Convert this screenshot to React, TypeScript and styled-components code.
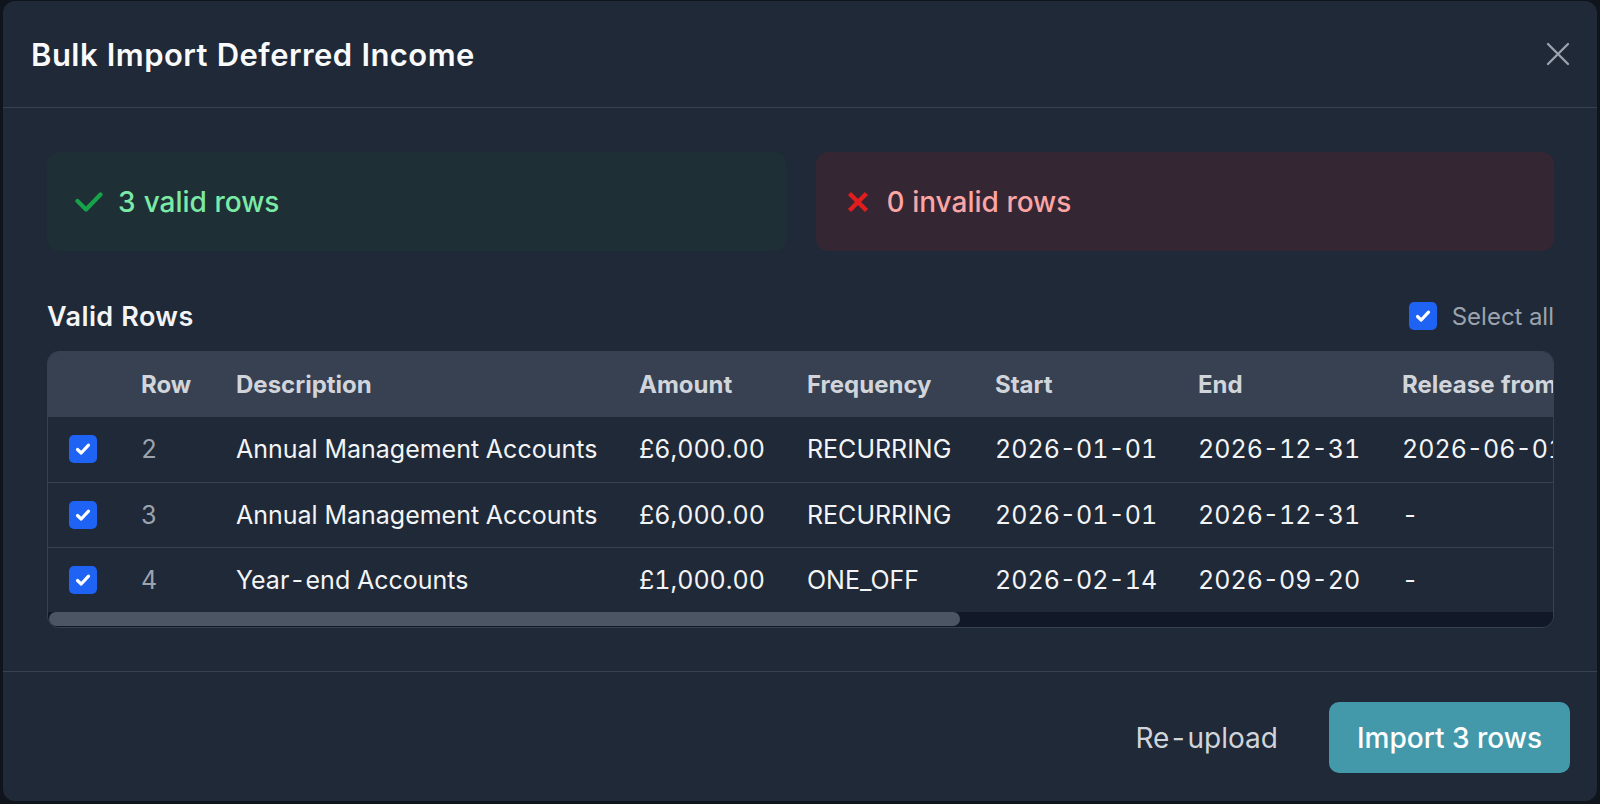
import React from "react";
import styled, { createGlobalStyle } from "styled-components";

const GlobalStyle = createGlobalStyle`
  html, body {
    margin: 0;
    padding: 0;
    background: #0f141d;
    overflow: hidden;
  }
  body {
    font-family: Inter, "Noto Sans", "Liberation Sans", sans-serif;
    font-variant-numeric: tabular-nums;
    -webkit-font-smoothing: antialiased;
  }
  * { box-sizing: border-box; }
`;

const Page = styled.div`
  height: 804px;
  padding: 1px 3px 3px 3px;
  display: flex;
`;

const Modal = styled.div`
  flex: 1;
  background: #1f2937;
  border-radius: 12px;
  display: flex;
  flex-direction: column;
  overflow: hidden;
`;

const Header = styled.header`
  height: 107px;
  flex: none;
  display: flex;
  align-items: center;
  justify-content: space-between;
  padding: 0 27px 0 28px;
  border-bottom: 1px solid #374151;
`;

const Title = styled.h2`
  margin: 0;
  font-size: 31px;
  font-weight: 600;
  color: #f9fafb;
  letter-spacing: 0.45px;
`;

const CloseButton = styled.button`
  width: 24px;
  height: 24px;
  padding: 0;
  border: 0;
  background: transparent;
  color: #9ca3af;
  display: flex;
  align-items: center;
  justify-content: center;
  cursor: pointer;
`;

const Body = styled.div`
  flex: 1;
  padding: 44px 43px 0 44px;
  display: flex;
  flex-direction: column;
`;

const Summary = styled.div`
  display: grid;
  grid-template-columns: 1fr 1fr;
  gap: 30px;
`;

const SummaryCard = styled.div<{ $tone: "ok" | "bad" }>`
  height: 99px;
  border-radius: 12px;
  display: flex;
  align-items: center;
  gap: 15px;
  padding-left: 28px;
  background: ${(p) => (p.$tone === "ok" ? "#1e3035" : "#342733")};
  color: ${(p) => (p.$tone === "ok" ? "#7beaa6" : "#fca5a5")};
  font-size: 28px;
  font-weight: 500;
`;

const IconBox = styled.span`
  width: 28px;
  height: 28px;
  display: flex;
  align-items: center;
  justify-content: center;
  flex: none;
`;

const SectionHead = styled.div`
  margin-top: 51px;
  height: 28px;
  display: flex;
  align-items: center;
  justify-content: space-between;
`;

const SectionTitle = styled.h3`
  margin: 0;
  font-size: 27px;
  font-weight: 600;
  color: #f3f4f6;
  letter-spacing: 0.4px;
`;

const SelectAll = styled.label`
  display: flex;
  align-items: center;
  gap: 15px;
  font-size: 24px;
  color: #9ca3af;
  cursor: pointer;
`;

const Box = styled.span`
  width: 28px;
  height: 28px;
  border-radius: 5px;
  background: #1f63f5;
  display: inline-flex;
  align-items: center;
  justify-content: center;
  flex: none;
  vertical-align: middle;
`;

const TableFrame = styled.div`
  margin-top: 21px;
  border: 1px solid #374151;
  border-radius: 12px;
  overflow: hidden;
`;

const Viewport = styled.div`
  overflow: hidden;
`;

const ScrollTrack = styled.div`
  height: 15px;
  background: #111827;
  padding: 0 1px 1px;
  display: flex;
`;

const ScrollThumb = styled.div`
  height: 14px;
  background: #4b5563;
  border-radius: 7px;
`;

const Table = styled.table`
  width: 2484px;
  table-layout: fixed;
  border-collapse: collapse;
`;

const Th = styled.th<{ $w?: number }>`
  width: ${(p) => (p.$w ? `${p.$w}px` : "auto")};
  height: 65px;
  padding: 0 22px;
  background: #374151;
  color: #d1d5db;
  font-size: 24px;
  font-weight: 700;
  text-align: left;
  white-space: nowrap;
`;

const Tr = styled.tr`
  & + & td {
    border-top: 1px solid #374151;
  }
`;

const Td = styled.td<{ $muted?: boolean }>`
  height: 65px;
  padding: 0 22px;
  font-size: 25px;
  color: ${(p) => (p.$muted ? "#9ca3af" : "#f3f4f6")};
  white-space: nowrap;
  vertical-align: middle;
`;

const CheckCell = styled(Td)`
  padding: 0 0 0 21px;
  line-height: 0;
`;

const Footer = styled.footer`
  flex: none;
  border-top: 1px solid #374151;
  padding: 30px 27px 28px;
  display: flex;
  justify-content: flex-end;
  align-items: center;
  gap: 23px;
`;

const GhostButton = styled.button`
  height: 71px;
  padding: 0 28px;
  border: 0;
  background: transparent;
  color: #d1d5db;
  font-family: inherit;
  font-variant-numeric: tabular-nums;
  font-size: 28px;
  cursor: pointer;
`;

const PrimaryButton = styled.button`
  height: 71px;
  padding: 0 28px;
  border: 0;
  border-radius: 10px;
  background: #4399aa;
  color: #ffffff;
  font-family: inherit;
  font-size: 28px;
  font-weight: 500;
  cursor: pointer;
`;

const Checkbox = () => (
  <Box>
    <svg width="20" height="20" viewBox="0 0 20 20" fill="none">
      <path d="M4.5 10.5 L8.2 14 L15.5 6.2" stroke="#fff" strokeWidth="3.2" strokeLinecap="round" strokeLinejoin="round" />
    </svg>
  </Box>
);

const columns: { label: string; w?: number }[] = [
  { label: "", w: 71 },
  { label: "Row", w: 95 },
  { label: "Description", w: 403 },
  { label: "Amount", w: 168 },
  { label: "Frequency", w: 188 },
  { label: "Start", w: 203 },
  { label: "End", w: 204 },
  { label: "Release from" },
];

const rows = [
  { row: 2, desc: "Annual Management Accounts", amount: "£6,000.00", freq: "RECURRING", start: "2026-01-01", end: "2026-12-31", release: "2026-06-01" },
  { row: 3, desc: "Annual Management Accounts", amount: "£6,000.00", freq: "RECURRING", start: "2026-01-01", end: "2026-12-31", release: "-" },
  { row: 4, desc: "Year-end Accounts", amount: "£1,000.00", freq: "ONE_OFF", start: "2026-02-14", end: "2026-09-20", release: "-" },
];

const VIEW_WIDTH = 1506;
const CONTENT_WIDTH = 2484;

export default function App() {
  const thumbWidth = `${(VIEW_WIDTH / CONTENT_WIDTH) * 100}%`;
  return (
    <>
      <GlobalStyle />
      <Page>
        <Modal>
          <Header>
            <Title>Bulk Import Deferred Income</Title>
            <CloseButton aria-label="Close">
              <svg width="24" height="24" viewBox="0 0 24 24" fill="none">
                <path d="M2 2 L22 22 M22 2 L2 22" stroke="currentColor" strokeWidth="2.3" strokeLinecap="round" />
              </svg>
            </CloseButton>
          </Header>
          <Body>
            <Summary>
              <SummaryCard $tone="ok">
                <IconBox>
                  <svg width="28" height="28" viewBox="0 0 28 28" fill="none">
                    <path d="M2.5 13 L11 21.5 L25.5 6.5" stroke="#16a34a" strokeWidth="4.2" strokeLinecap="round" strokeLinejoin="round" />
                  </svg>
                </IconBox>
                3 valid rows
              </SummaryCard>
              <SummaryCard $tone="bad">
                <IconBox>
                  <svg width="28" height="28" viewBox="0 0 28 28" fill="none">
                    <path d="M5.5 5.5 L22.5 22.5 M22.5 5.5 L5.5 22.5" stroke="#e11d1d" strokeWidth="4.4" strokeLinecap="butt" />
                  </svg>
                </IconBox>
                0 invalid rows
              </SummaryCard>
            </Summary>

            <SectionHead>
              <SectionTitle>Valid Rows</SectionTitle>
              <SelectAll>
                <Checkbox />
                Select all
              </SelectAll>
            </SectionHead>

            <TableFrame>
              <Viewport>
                <Table>
                  <thead>
                    <tr>
                      {columns.map((c, i) => (
                        <Th key={i} $w={c.w}>
                          {c.label}
                        </Th>
                      ))}
                    </tr>
                  </thead>
                  <tbody>
                    {rows.map((r) => (
                      <Tr key={r.row}>
                        <CheckCell>
                          <Checkbox />
                        </CheckCell>
                        <Td $muted>{r.row}</Td>
                        <Td>{r.desc}</Td>
                        <Td>{r.amount}</Td>
                        <Td>{r.freq}</Td>
                        <Td>{r.start}</Td>
                        <Td>{r.end}</Td>
                        <Td>{r.release}</Td>
                      </Tr>
                    ))}
                  </tbody>
                </Table>
              </Viewport>
              <ScrollTrack>
                <ScrollThumb style={{ width: thumbWidth }} />
              </ScrollTrack>
            </TableFrame>
          </Body>
          <Footer>
            <GhostButton>Re-upload</GhostButton>
            <PrimaryButton>Import 3 rows</PrimaryButton>
          </Footer>
        </Modal>
      </Page>
    </>
  );
}
